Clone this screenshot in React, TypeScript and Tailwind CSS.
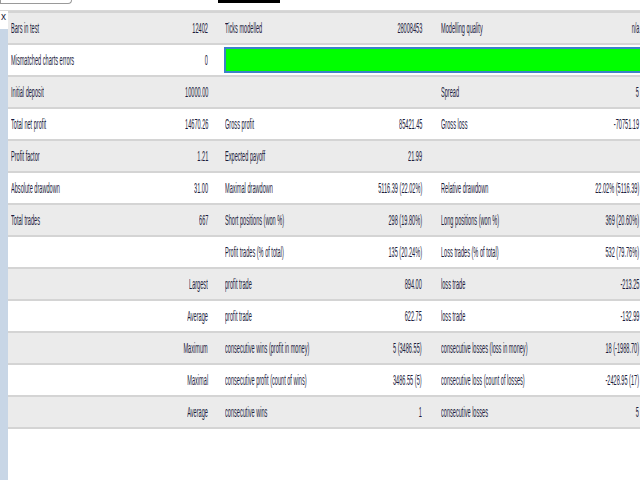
import React from "react";

type Row = [string, string, string, string, string, string];
const rows: (Row | "bar")[] = [
  ["Bars in test", "12402", "Ticks modelled", "28008453", "Modelling quality", "n/a"],
  "bar",
  ["Initial deposit", "10000.00", "", "", "Spread", "5"],
  ["Total net profit", "14670.26", "Gross profit", "85421.45", "Gross loss", "-70751.19"],
  ["Profit factor", "1.21", "Expected payoff", "21.99", "", ""],
  ["Absolute drawdown", "31.00", "Maximal drawdown", "5116.39 (22.02%)", "Relative drawdown", "22.02% (5116.39)"],
  ["Total trades", "667", "Short positions (won %)", "298 (19.80%)", "Long positions (won %)", "369 (20.60%)"],
  ["", "", "Profit trades (% of total)", "135 (20.24%)", "Loss trades (% of total)", "532 (79.76%)"],
  ["", "Largest", "profit trade", "894.00", "loss trade", "-213.25"],
  ["", "Average", "profit trade", "622.75", "loss trade", "-132.99"],
  ["", "Maximum", "consecutive wins (profit in money)", "5 (3486.55)", "consecutive losses (loss in money)", "18 (-1988.70)"],
  ["", "Maximal", "consecutive profit (count of wins)", "3486.55 (5)", "consecutive loss (count of losses)", "-2428.95 (17)"],
  ["", "Average", "consecutive wins", "1", "consecutive losses", "5"],
];

const L = ({ t }: { t: string }) => (
  <span className="inline-block whitespace-nowrap origin-left scale-x-[0.4]">{t}</span>
);
const R = ({ t }: { t: string }) => (
  <span className="inline-block whitespace-nowrap origin-right scale-x-[0.4]">{t}</span>
);

export default function App() {
  return (
    <div
      className="w-[640px] h-[480px] bg-white overflow-hidden relative text-[14px] text-[#1c1c3c]"
      style={{ fontFamily: '"Liberation Sans", Arial, sans-serif' }}
    >
      <div className="h-[11px] relative border-b border-[#d8d8d8]">
        <div className="absolute left-0 top-0 w-[72px] h-[4px] border border-t-0 border-[#9a9a9a] rounded-br-sm" />
        <div className="absolute left-[218px] top-0 w-[62px] h-[3px] bg-black" />
      </div>
      <div className="flex">
        <div className="w-[8px] shrink-0 relative bg-[#c8d6e6] h-[469px]">
          <div className="absolute left-0 top-0 w-[8px] h-[18px] bg-white text-[10px] leading-[10px] pl-[1px] pt-[1px]">x</div>
        </div>
        <div className="flex-1 min-w-0 border-t-2 border-[#d4d4d4]">
          {rows.map((r, i) => {
            const bg = i % 2 === 0 ? "bg-[#ebebeb]" : "bg-white";
            if (r === "bar")
              return (
                <div key={i} className={`h-[32px] border-b-2 border-[#d4d4d4] grid grid-cols-[142px_66px_1fr] ${bg}`}>
                  <div className="flex items-center pl-[3px]"><L t="Mismatched charts errors" /></div>
                  <div className="flex items-center justify-end pr-[8px]"><R t="0" /></div>
                  <div className="flex items-center pl-[8px]">
                    <div className="h-[26px] w-full bg-[#00ff00] border-2 border-[#3b82c8] border-r-0" />
                  </div>
                </div>
              );
            return (
              <div key={i} className={`h-[32px] border-b-2 border-[#d4d4d4] grid grid-cols-[142px_66px_114px_102px_128px_80px] ${bg}`}>
                <div className="flex items-center pl-[3px]"><L t={r[0]} /></div>
                <div className="flex items-center justify-end pr-[8px]"><R t={r[1]} /></div>
                <div className="flex items-center pl-[9px]"><L t={r[2]} /></div>
                <div className="flex items-center justify-end pr-[10px]"><R t={r[3]} /></div>
                <div className="flex items-center pl-[9px]"><L t={r[4]} /></div>
                <div className="flex items-center justify-end pr-[1px]"><R t={r[5]} /></div>
              </div>
            );
          })}
        </div>
      </div>
    </div>
  );
}
